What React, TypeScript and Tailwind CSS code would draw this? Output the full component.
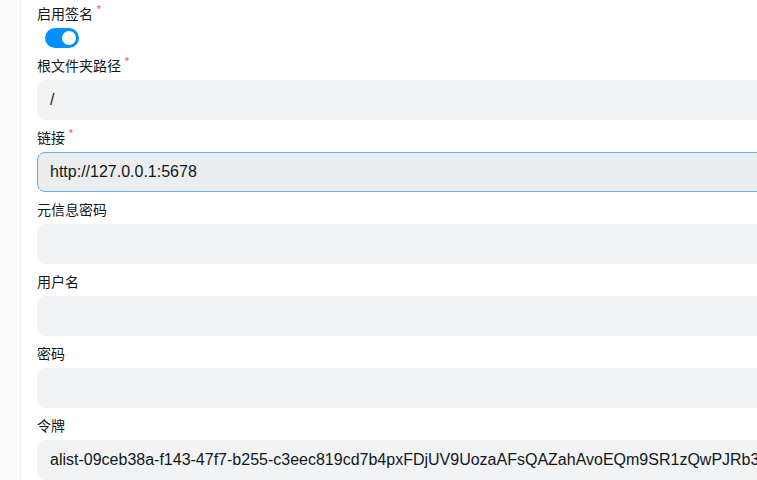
import React from "react";

const FONT = {
  fontFamily: '"Liberation Sans", "Noto Sans CJK SC", sans-serif',
};

interface FieldProps {
  label: string;
  value?: string;
  required?: boolean;
  focused?: boolean;
}

const Label = ({ text, required }: { text: string; required?: boolean }) => (
  <div className="flex h-5 items-center mb-1 text-[14px] leading-5 text-[#11181c]">
    <span>{text}</span>
    {required && (
      <span className="ml-1 text-[10px] leading-none text-[#e5484d] -mt-2">*</span>
    )}
  </div>
);

const Field = ({ label, value = "", required, focused }: FieldProps) => (
  <div className="flex flex-col">
    <Label text={label} required={required} />
    <div
      className={
        focused
          ? "flex h-10 w-[760px] items-center rounded-[8px] border border-[#5eb0ef] bg-[#ebedef] px-3 text-[16px] text-[#11181c] whitespace-nowrap overflow-hidden"
          : "flex h-10 w-[760px] items-center rounded-[8px] border border-transparent bg-[#f1f3f5] px-3 text-[16px] text-[#11181c] whitespace-nowrap overflow-hidden"
      }
    >
      {value}
    </div>
  </div>
);

export default function App() {
  return (
    <div
      className="flex h-[480px] w-[757px] overflow-hidden bg-white"
      style={FONT}
    >
      <div className="w-[21px] shrink-0 border-r border-[#efefef] bg-[#fbfbfb]" />
      <div className="flex flex-col gap-2 pl-4 pt-1">
        <div className="flex flex-col">
          <Label text="启用签名" required />
          <div className="ml-2 flex h-5 w-[34px] items-center justify-end rounded-full bg-[#0091ff] px-[3px]">
            <div className="h-[14px] w-[14px] rounded-full bg-white" />
          </div>
        </div>
        <Field label="根文件夹路径" value="/" required />
        <Field label="链接" value="http://127.0.0.1:5678" required focused />
        <Field label="元信息密码" />
        <Field label="用户名" />
        <Field label="密码" />
        <Field
          label="令牌"
          value="alist-09ceb38a-f143-47f7-b255-c3eec819cd7b4pxFDjUV9UozaAFsQAZahAvoEQm9SR1zQwPJRb3kXn2"
        />
      </div>
    </div>
  );
}
